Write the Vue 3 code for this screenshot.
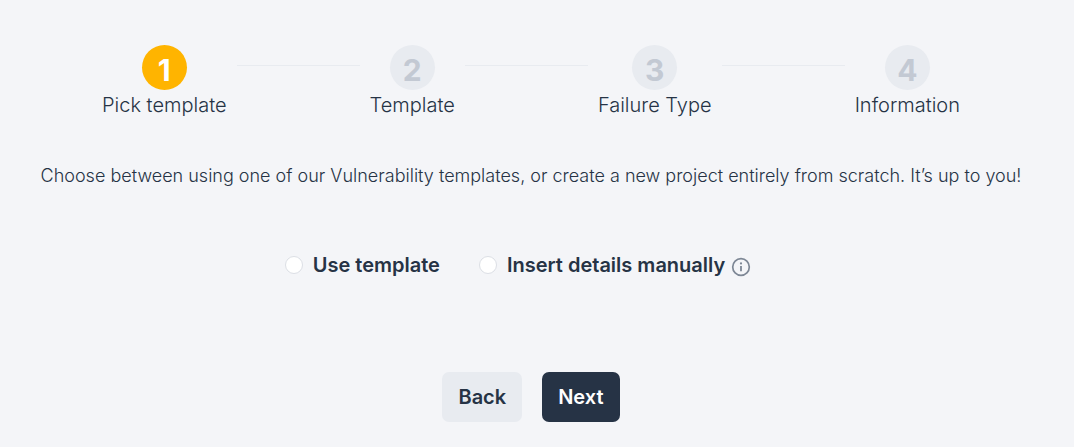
<script setup>
import { ref } from 'vue'

const steps = ['Pick template', 'Template', 'Failure Type', 'Information']
const current = ref(0)
const mode = ref('')
</script>

<template>
  <main class="wizard">
    <ol class="steps">
      <template v-for="(step, i) in steps" :key="step">
        <li v-if="i > 0" class="line" aria-hidden="true"></li>
        <li class="step" :class="{ active: i === current }">
          <span class="circle">{{ i + 1 }}</span>
          <span class="name">{{ step }}</span>
        </li>
      </template>
    </ol>

    <p class="intro">Choose between using one of our Vulnerability templates, or create a new project entirely from scratch. It’s up to you!</p>

    <div class="options" role="radiogroup" aria-label="Project source">
      <div class="option">
        <input id="use-template" v-model="mode" type="radio" name="mode" value="template" />
        <label for="use-template">Use template</label>
      </div>
      <div class="option">
        <input id="manual" v-model="mode" type="radio" name="mode" value="manual" />
        <label for="manual">Insert details manually</label>
        <svg class="info" viewBox="0 0 20 20" aria-hidden="true">
          <circle cx="10" cy="10" r="8.3" fill="none" stroke="currentColor" stroke-width="1.7" />
          <path d="M10 9v5.2" stroke="currentColor" stroke-width="1.8" />
          <circle cx="10" cy="6.4" r="1.1" fill="currentColor" />
        </svg>
      </div>
    </div>

    <div class="actions">
      <button type="button" class="back">Back</button>
      <button type="button" class="next">Next</button>
    </div>
  </main>
</template>

<style>
body {
  margin: 0;
  background: #f4f5f8;
}
</style>

<style scoped>
.wizard {
  box-sizing: border-box;
  min-height: 100vh;
  padding: 45px 24px 24px 12px;
  display: flex;
  flex-direction: column;
  align-items: center;
  font-family: Inter, "Open Sans", sans-serif;
  font-size: 18px;
  line-height: 28px;
  color: #263345;
  background: #f4f5f8;
}
.steps {
  width: 100%;
  max-width: 858px;
  margin: 0;
  padding: 0;
  display: flex;
  gap: 10px;
  list-style: none;
}
.step {
  display: flex;
  flex-direction: column;
  align-items: center;
  gap: 1px;
  font-weight: 300;
  font-size: 20px;
  white-space: nowrap;
}
.circle {
  width: 45px;
  height: 45px;
  border-radius: 50%;
  display: flex;
  align-items: center;
  justify-content: center;
  box-sizing: border-box;
  padding-top: 4px;
  background: #e8ebf0;
  color: #c3c9d3;
  font-size: 30px;
  font-weight: 700;
}
.active .circle {
  background: #ffb400;
  color: #fff;
}
.line {
  flex: 1;
  height: 1px;
  margin-top: 20px;
  background: #e8ebf0;
}
.intro {
  margin: 43px 0 0;
  font-weight: 300;
  text-align: center;
}
.options {
  margin-top: 61px;
  padding-right: 26px;
  display: flex;
  flex-wrap: wrap;
  gap: 39px;
}
.option {
  display: flex;
  align-items: center;
  font-size: 20px;
  font-weight: 600;
}
.option input {
  appearance: none;
  width: 18px;
  height: 18px;
  margin: 0 10px 0 0;
  border: 1px solid #dcdfe5;
  border-radius: 50%;
  background: #fff;
}
.option input:checked {
  border: 5px solid #ffb400;
}
.info {
  width: 20px;
  height: 20px;
  margin: 4px 0 0 6px;
  color: #7d8795;
}
.actions {
  margin-top: 93px;
  display: flex;
  gap: 20px;
}
button {
  height: 50px;
  padding: 0 16px;
  border: 0;
  border-radius: 7px;
  font: inherit;
  font-size: 20px;
  font-weight: 600;
  cursor: pointer;
}
.back {
  background: #e8ebf0;
  color: #263345;
}
.next {
  background: #263345;
  color: #fff;
}
</style>
